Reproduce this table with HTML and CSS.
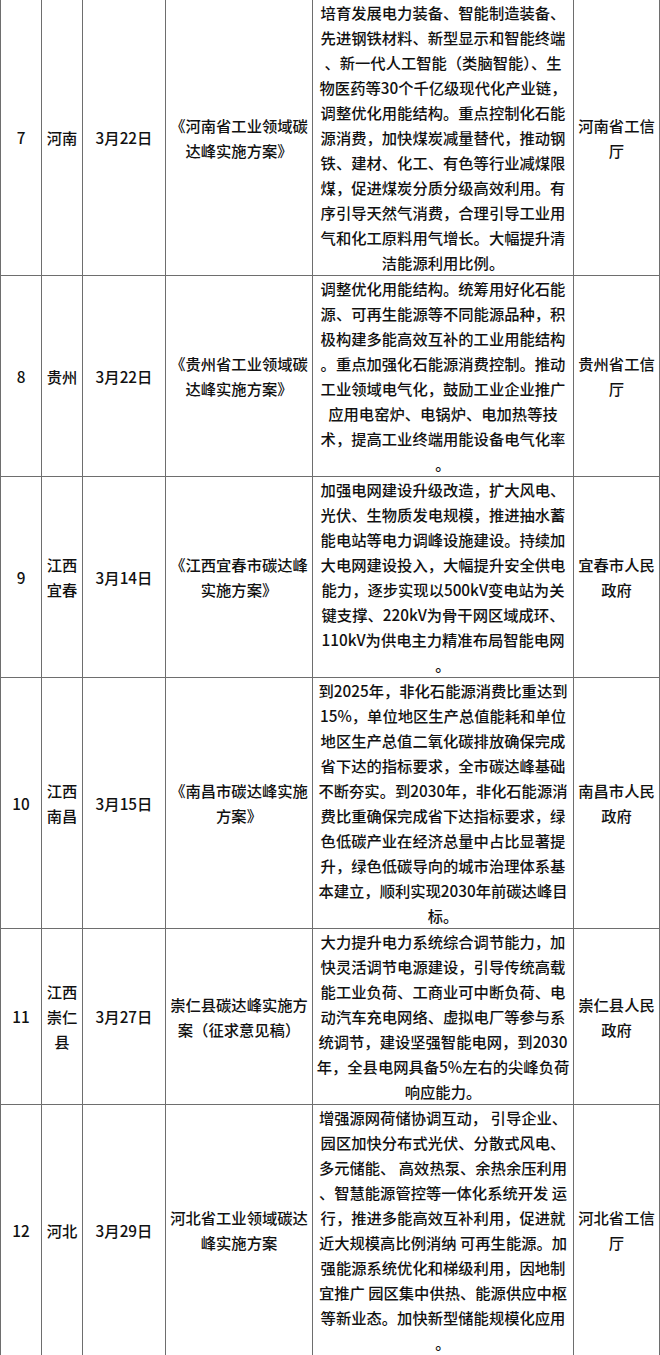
FILE: index.html
```html
<!DOCTYPE html>
<html lang="zh-CN">
<head>
<meta charset="utf-8">
<title>碳达峰实施方案</title>
<link rel="stylesheet" href="styles.css">
</head>
<body>
<table class="policy-table">
  <tbody>
    <tr>
      <td class="c-no">7</td>
      <td class="c-region">河南</td>
      <td class="c-date">3月22日</td>
      <td class="c-title">《河南省工业领域碳<br>达峰实施方案》</td>
      <td class="c-content">培育发展电力装备、智能制造装备、<br>先进钢铁材料、新型显示和智能终端<br>、新一代人工智能（类脑智能）、生<br>物医药等30个千亿级现代化产业链，<br>调整优化用能结构。重点控制化石能<br>源消费，加快煤炭减量替代，推动钢<br>铁、建材、化工、有色等行业减煤限<br>煤，促进煤炭分质分级高效利用。有<br>序引导天然气消费，合理引导工业用<br>气和化工原料用气增长。大幅提升清<br>洁能源利用比例。</td>
      <td class="c-issuer">河南省工信<br>厅</td>
    </tr>
    <tr>
      <td class="c-no">8</td>
      <td class="c-region">贵州</td>
      <td class="c-date">3月22日</td>
      <td class="c-title">《贵州省工业领域碳<br>达峰实施方案》</td>
      <td class="c-content">调整优化用能结构。统筹用好化石能<br>源、可再生能源等不同能源品种，积<br>极构建多能高效互补的工业用能结构<br>。重点加强化石能源消费控制。推动<br>工业领域电气化，鼓励工业企业推广<br>应用电窑炉、电锅炉、电加热等技<br>术，提高工业终端用能设备电气化率<br>。</td>
      <td class="c-issuer">贵州省工信<br>厅</td>
    </tr>
    <tr>
      <td class="c-no">9</td>
      <td class="c-region">江西<br>宜春</td>
      <td class="c-date">3月14日</td>
      <td class="c-title">《江西宜春市碳达峰<br>实施方案》</td>
      <td class="c-content">加强电网建设升级改造，扩大风电、<br>光伏、生物质发电规模，推进抽水蓄<br>能电站等电力调峰设施建设。持续加<br>大电网建设投入，大幅提升安全供电<br>能力，逐步实现以500kV变电站为关<br>键支撑、220kV为骨干网区域成环、<br>110kV为供电主力精准布局智能电网<br>。</td>
      <td class="c-issuer">宜春市人民<br>政府</td>
    </tr>
    <tr>
      <td class="c-no">10</td>
      <td class="c-region">江西<br>南昌</td>
      <td class="c-date">3月15日</td>
      <td class="c-title">《南昌市碳达峰实施<br>方案》</td>
      <td class="c-content">到2025年，非化石能源消费比重达到<br>15%，单位地区生产总值能耗和单位<br>地区生产总值二氧化碳排放确保完成<br>省下达的指标要求，全市碳达峰基础<br>不断夯实。到2030年，非化石能源消<br>费比重确保完成省下达指标要求，绿<br>色低碳产业在经济总量中占比显著提<br>升，绿色低碳导向的城市治理体系基<br>本建立，顺利实现2030年前碳达峰目<br>标。</td>
      <td class="c-issuer">南昌市人民<br>政府</td>
    </tr>
    <tr>
      <td class="c-no">11</td>
      <td class="c-region">江西<br>崇仁<br>县</td>
      <td class="c-date">3月27日</td>
      <td class="c-title">崇仁县碳达峰实施方<br>案（征求意见稿）</td>
      <td class="c-content">大力提升电力系统综合调节能力，加<br>快灵活调节电源建设，引导传统高载<br>能工业负荷、工商业可中断负荷、电<br>动汽车充电网络、虚拟电厂等参与系<br>统调节，建设坚强智能电网，到2030<br>年，全县电网具备5%左右的尖峰负荷<br>响应能力。</td>
      <td class="c-issuer">崇仁县人民<br>政府</td>
    </tr>
    <tr>
      <td class="c-no">12</td>
      <td class="c-region">河北</td>
      <td class="c-date">3月29日</td>
      <td class="c-title">河北省工业领域碳达<br>峰实施方案</td>
      <td class="c-content">增强源网荷储协调互动， 引导企业、<br>园区加快分布式光伏、分散式风电、<br>多元储能、 高效热泵、余热余压利用<br>、智慧能源管控等一体化系统开发 运<br>行，推进多能高效互补利用，促进就<br>近大规模高比例消纳 可再生能源。加<br>强能源系统优化和梯级利用，因地制<br>宜推广 园区集中供热、能源供应中枢<br>等新业态。加快新型储能规模化应用<br>。</td>
      <td class="c-issuer">河北省工信<br>厅</td>
    </tr>
  </tbody>
</table>
</body>
</html>
```

FILE: styles.css
```css
html, body {
  margin: 0;
  padding: 0;
  background: #ffffff;
}

body {
  font-family: "Noto Sans CJK SC", "Noto Sans", sans-serif;
  font-size: 15.3px;
  font-weight: 500;
  line-height: 25px;
  color: #111111;
}

.policy-table {
  width: 660px;
  table-layout: fixed;
  border-collapse: separate;
  border-spacing: 0;
}

.policy-table td {
  box-sizing: border-box;
  padding: 0;
  border-left: 1px solid #6e6e6e;
  border-bottom: 1px solid #6e6e6e;
  text-align: center;
  vertical-align: middle;
  white-space: nowrap;
  overflow: hidden;
}

.policy-table td.c-issuer {
  border-right: 1px solid #6e6e6e;
}

.c-no { width: 41px; }
.c-region { width: 41px; }
.c-date { width: 83px; }
.c-title { width: 147px; }
.c-content { width: 261px; }
.c-issuer { width: 87px; }
```
